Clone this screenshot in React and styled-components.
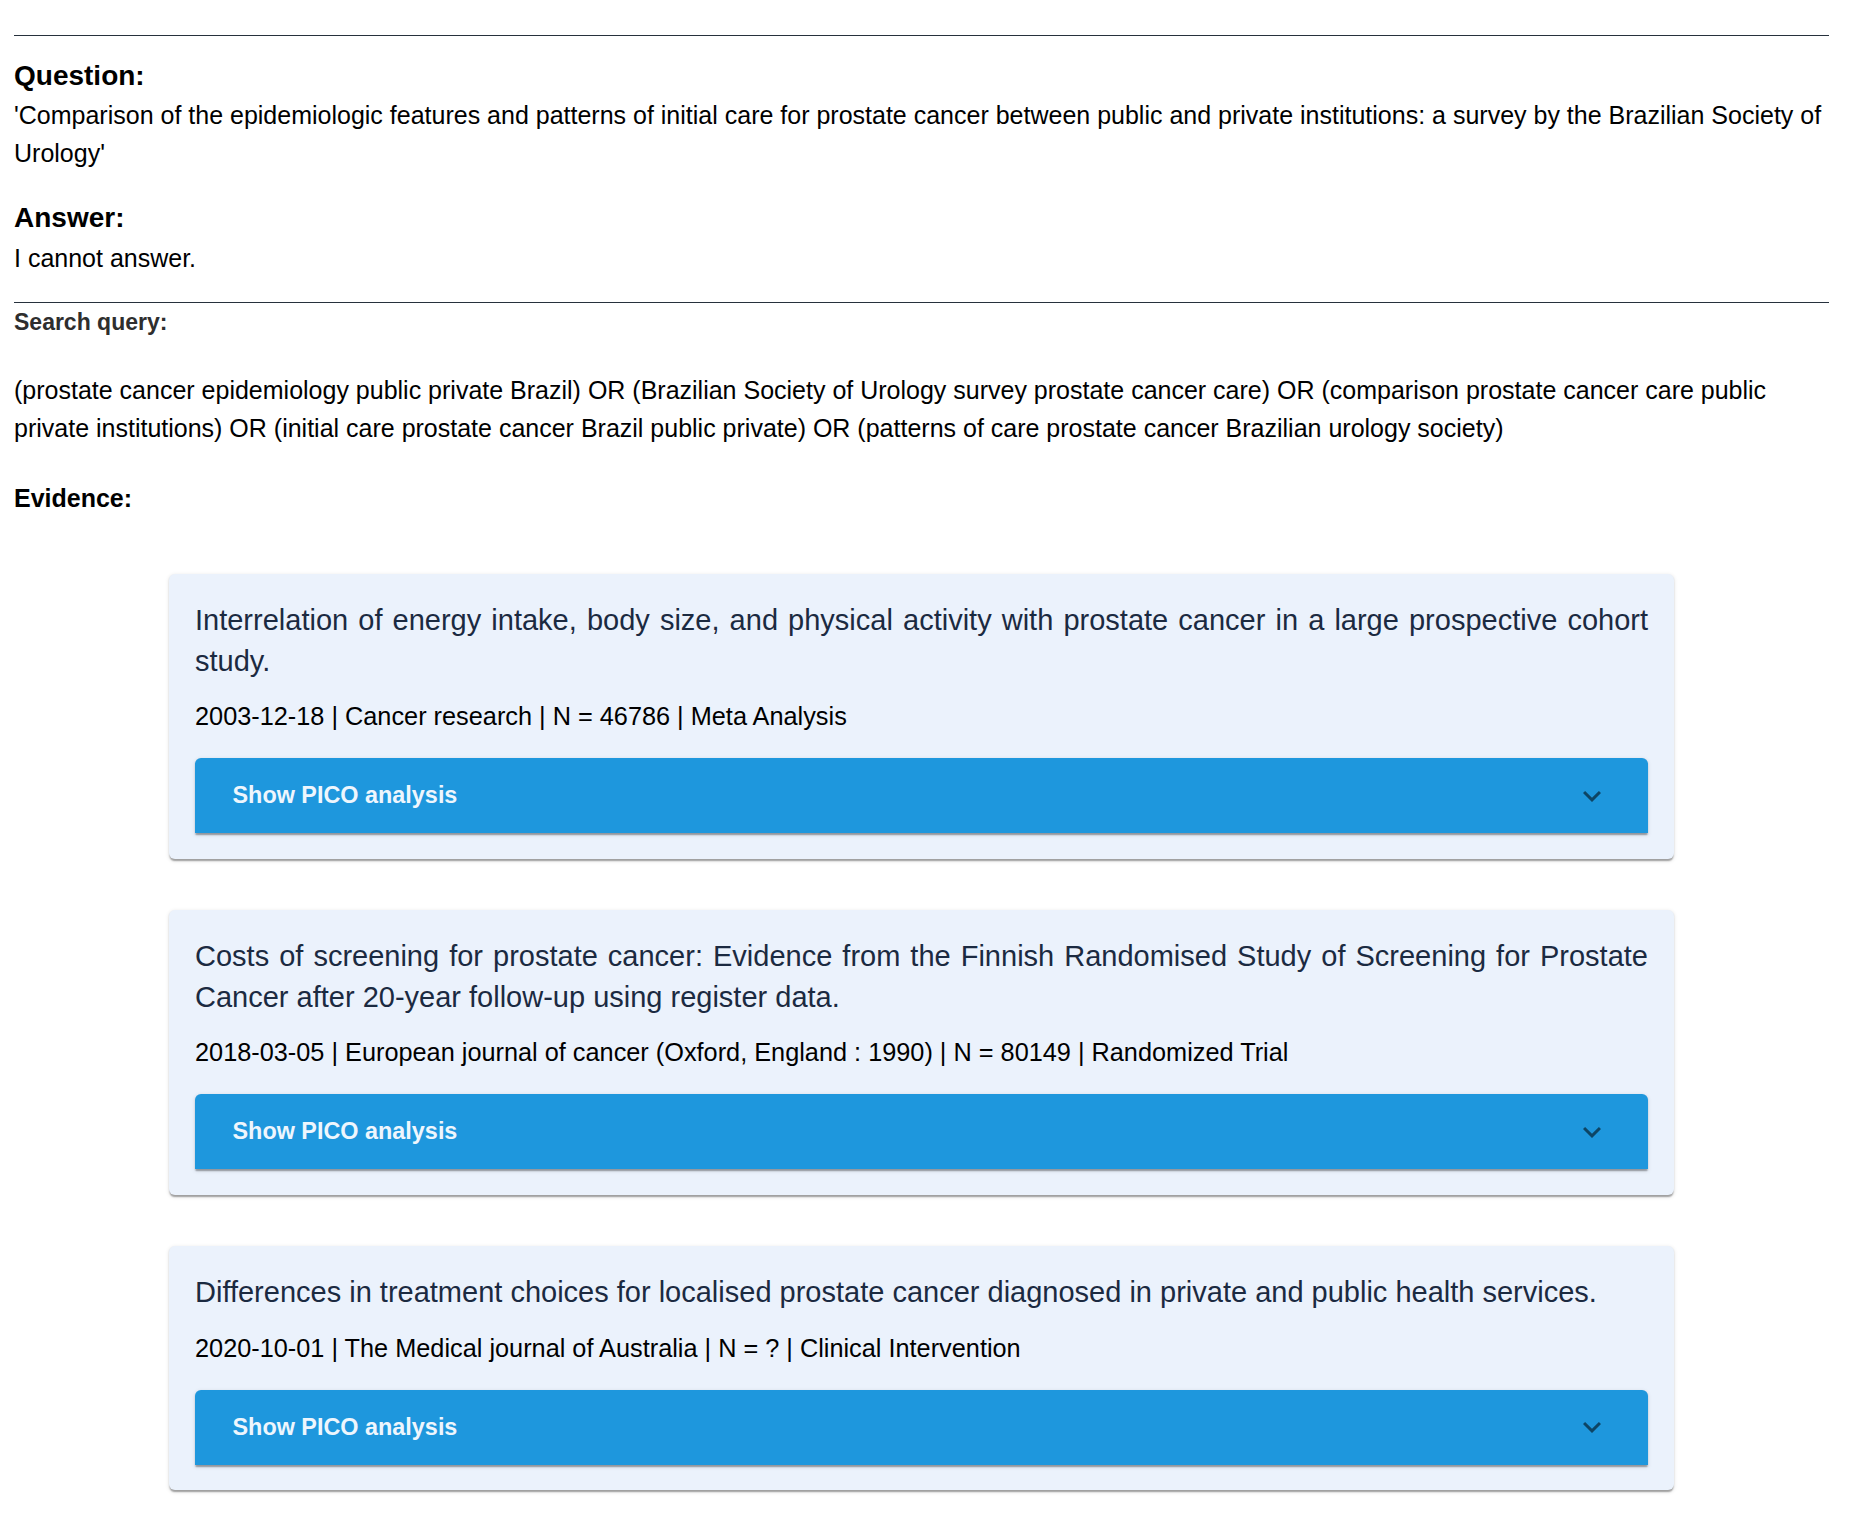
import React from 'react'
import styled, { createGlobalStyle } from 'styled-components'

const GlobalStyle = createGlobalStyle`
  body {
    margin: 0;
    background: #ffffff;
    font-family: "Liberation Sans", Arial, sans-serif;
    color: #000000;
  }
`

const papers = [
  {
    title: 'Interrelation of energy intake, body size, and physical activity with prostate cancer in a large prospective cohort study.',
    meta: '2003-12-18 | Cancer research | N = 46786 | Meta Analysis',
  },
  {
    title: 'Costs of screening for prostate cancer: Evidence from the Finnish Randomised Study of Screening for Prostate Cancer after 20-year follow-up using register data.',
    meta: '2018-03-05 | European journal of cancer (Oxford, England : 1990) | N = 80149 | Randomized Trial',
  },
  {
    title: 'Differences in treatment choices for localised prostate cancer diagnosed in private and public health services.',
    meta: '2020-10-01 | The Medical journal of Australia | N = ? | Clinical Intervention',
  },
]

const query =
  '(prostate cancer epidemiology public private Brazil) OR (Brazilian Society of Urology survey prostate cancer care) OR (comparison prostate cancer care public private institutions) OR (initial care prostate cancer Brazil public private) OR (patterns of care prostate cancer Brazilian urology society)'

const ExpandMore = () => (
  <ChevronIcon viewBox="0 0 24 24">
    <path d="M16.59 8.59 12 13.17 7.41 8.59 6 10l6 6 6-6z" />
  </ChevronIcon>
)

const EvidenceCard = ({ title, meta }) => (
  <Card>
    <CardTitle>{title}</CardTitle>
    <CardMeta>{meta}</CardMeta>
    <PicoToggle type="button">
      <span>Show PICO analysis</span>
      <ExpandMore />
    </PicoToggle>
  </Card>
)

const App = () => {
  return (
    <Page>
      <GlobalStyle />
      <Divider />
      <SectionTitle $top={24} $bottom={4}>Question:</SectionTitle>
      <BodyText>
        'Comparison of the epidemiologic features and patterns of initial care for prostate cancer between public and private institutions: a survey by the Brazilian Society of Urology'
      </BodyText>
      <SectionTitle $top={29.6} $bottom={5}>Answer:</SectionTitle>
      <BodyText>I cannot answer.</BodyText>
      <Divider $top={24} />
      <FieldLabel>Search query:</FieldLabel>
      <QueryText>{query}</QueryText>
      <EvidenceLabel>Evidence:</EvidenceLabel>
      <CardList>
        {papers.map((p) => (
          <EvidenceCard key={p.meta} title={p.title} meta={p.meta} />
        ))}
      </CardList>
    </Page>
  )
}

const Page = styled.div`
  display: flex;
  flex-direction: column;
  padding: 35px 23px 40px 14px;
`

const Divider = styled.hr`
  margin: ${(p) => p.$top || 0}px 0 0;
  border: 0;
  height: 1px;
  background: #27313d;
`

const SectionTitle = styled.h3`
  margin: ${(p) => p.$top}px 0 ${(p) => p.$bottom}px;
  font-size: 28px;
  line-height: 32px;
  font-weight: 700;
`

const BodyText = styled.p`
  margin: 0;
  font-size: 25px;
  line-height: 38.4px;
`

const FieldLabel = styled.div`
  margin-top: 5.7px;
  font-size: 23px;
  line-height: 26px;
  font-weight: 700;
  color: #2e2e2e;
`

const QueryText = styled(BodyText)`
  margin-top: 36.3px;
`

const EvidenceLabel = styled.p`
  margin: 31.2px 0 0;
  font-size: 25px;
  line-height: 38.4px;
  font-weight: 700;
`

const CardList = styled.div`
  margin-top: 56.7px;
  display: flex;
  flex-direction: column;
  align-items: center;
  gap: 51px;
`

const Card = styled.div`
  box-sizing: border-box;
  width: 1505px;
  padding: 26.5px 26px 25.5px;
  background: #ebf2fc;
  border-radius: 6px;
  box-shadow: 0 3px 1.5px -1.5px rgba(0, 0, 0, 0.2),
    0 1.5px 1.5px 0 rgba(0, 0, 0, 0.14), 0 1.5px 4.5px 0 rgba(0, 0, 0, 0.12);
`

const CardTitle = styled.div`
  margin: 0 0 17px;
  font-size: 29px;
  line-height: 40.5px;
  color: #1b2a41;
  text-align: justify;
`

const CardMeta = styled.div`
  margin: 0 0 24px;
  font-size: 25.3px;
  line-height: 36px;
  color: #000000;
`

const PicoToggle = styled.button`
  box-sizing: border-box;
  width: 100%;
  height: 75px;
  display: flex;
  align-items: center;
  justify-content: space-between;
  padding: 0 38px 0 37.5px;
  border: 0;
  border-radius: 6px 6px 0 0;
  background: #1e97dd;
  color: #eef6fd;
  font-family: "Liberation Sans", Arial, sans-serif;
  font-size: 23.4px;
  font-weight: 700;
  cursor: pointer;
  box-shadow: 0 3px 1.5px -1.5px rgba(0, 0, 0, 0.2),
    0 1.5px 1.5px 0 rgba(0, 0, 0, 0.14), 0 1.5px 4.5px 0 rgba(0, 0, 0, 0.12);
`

const ChevronIcon = styled.svg`
  width: 36px;
  height: 36px;
  fill: rgba(0, 0, 0, 0.54);
`

export default App
